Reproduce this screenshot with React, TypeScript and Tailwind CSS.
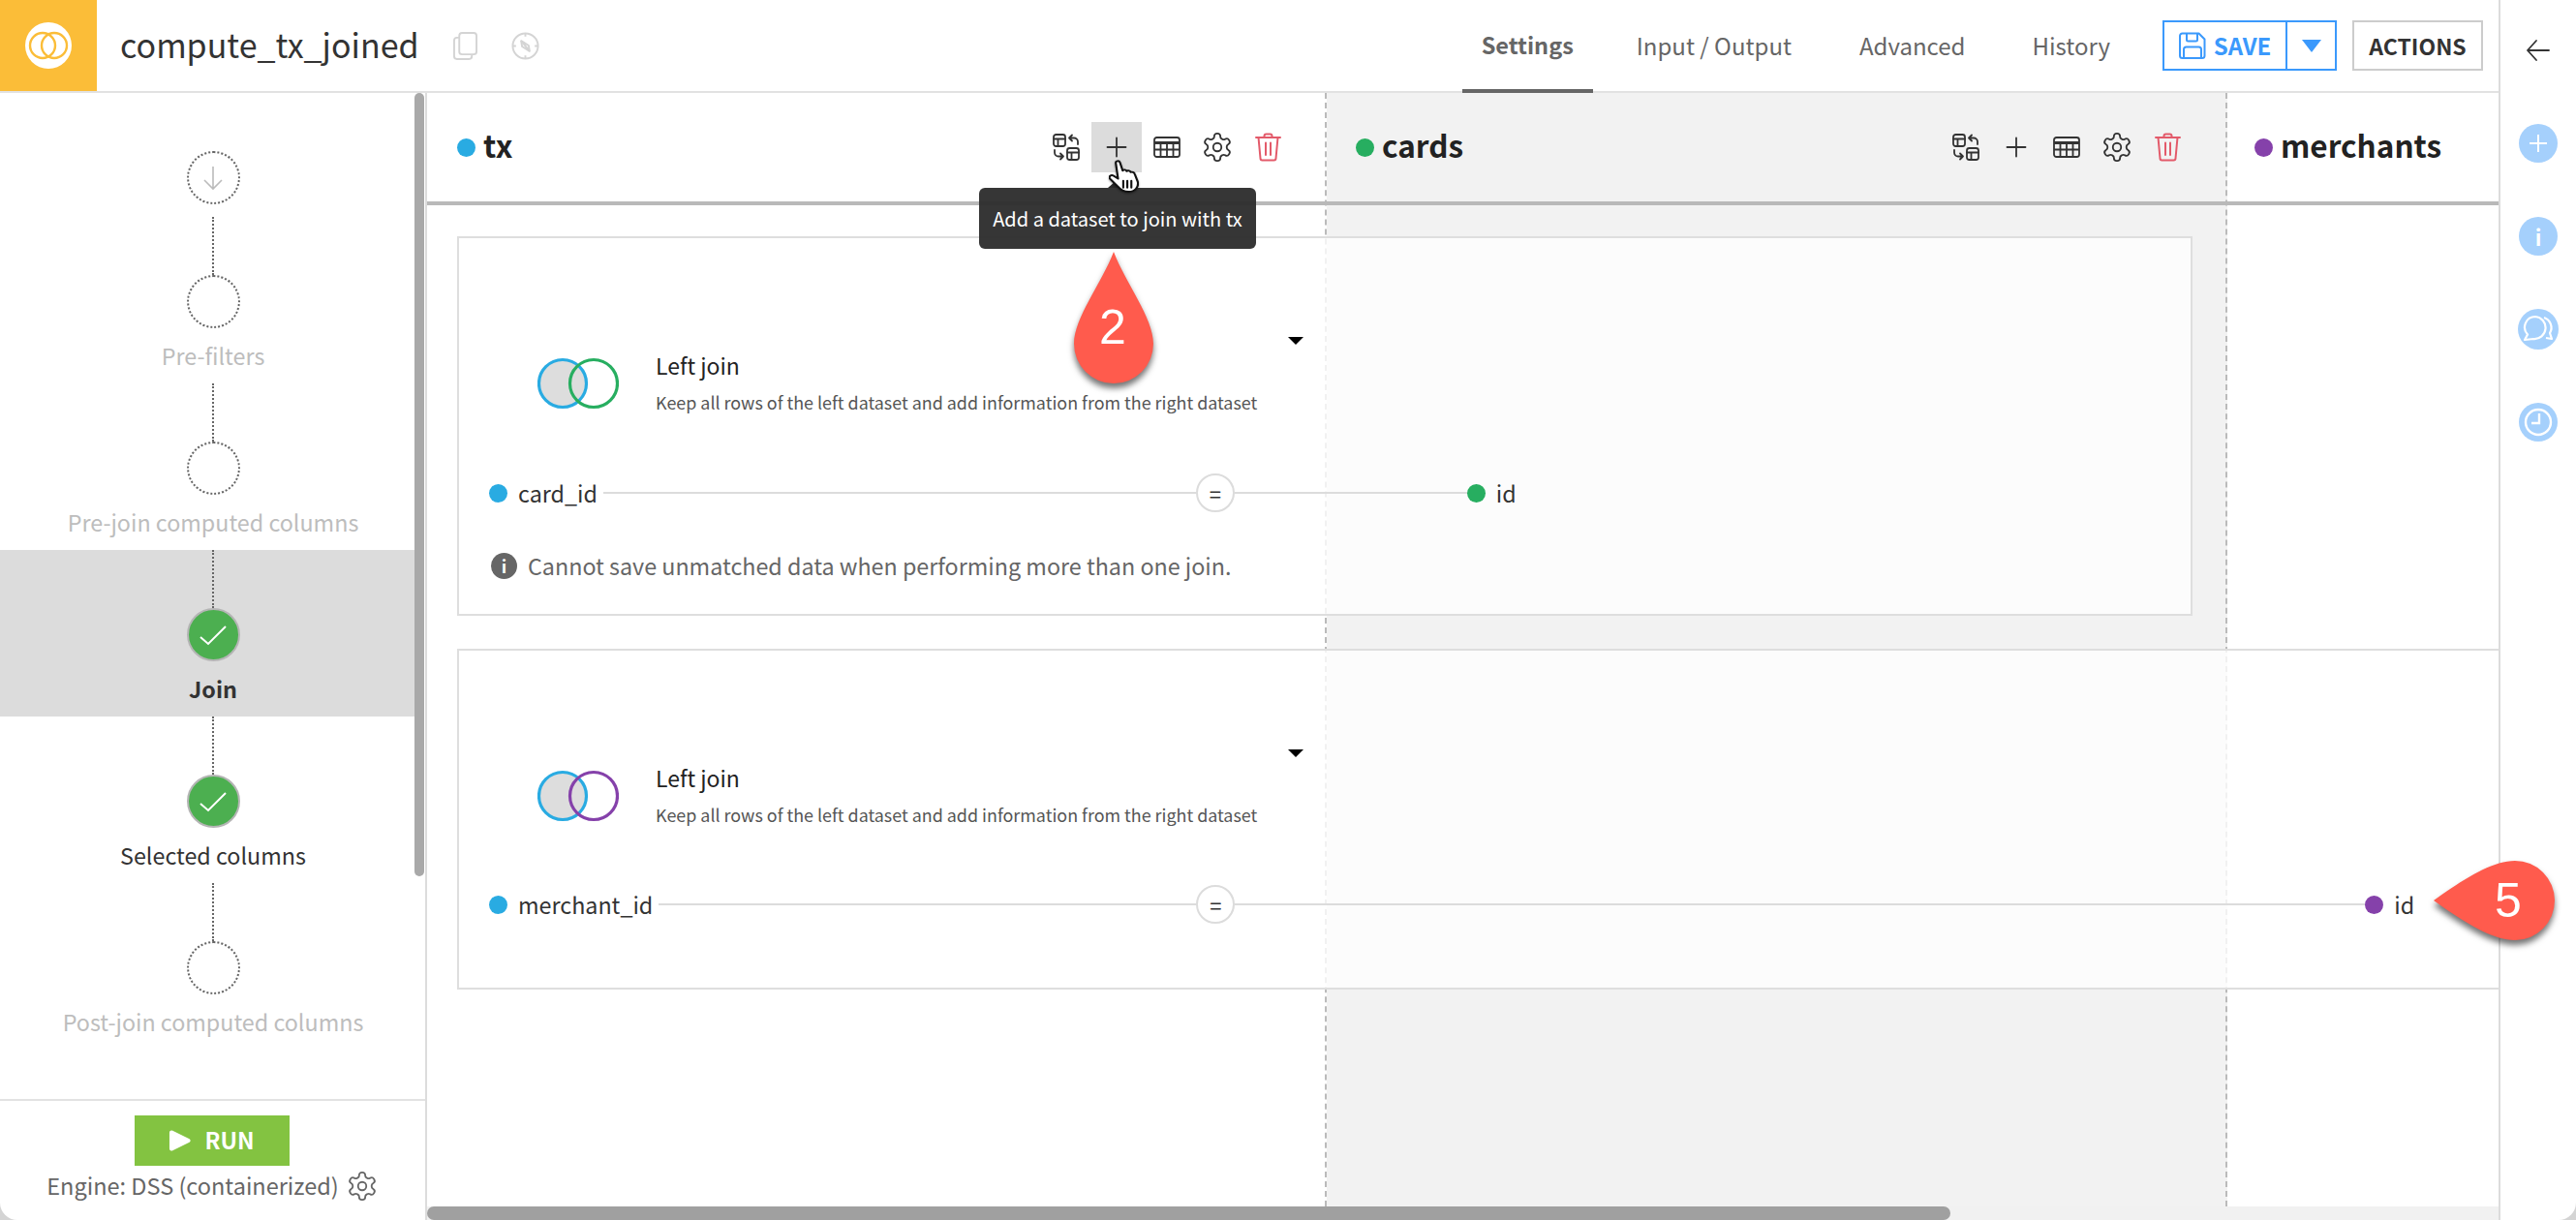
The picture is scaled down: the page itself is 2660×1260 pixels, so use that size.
import React from "react";

const BLUE = "#29abe2";
const GREEN = "#27ae60";
const PURPLE = "#8541aa";

function Swap() {
  return (
    <svg width="28" height="28" viewBox="0 0 28 28" fill="none" stroke="currentColor" strokeWidth="1.800" strokeLinecap="round" strokeLinejoin="round" className="shrink-0">
      <rect x="1" y="1" width="12" height="12" rx="2.500" />
      <path d="M1 5.500h12M5.500 5.500V13" />
      <rect x="15" y="15" width="12" height="12" rx="2.500" />
      <path d="M15 19.500h12M19.500 19.500V27" />
      <path d="M20 1.500l-3 3 3 3M17 4.500h5a4 4 0 0 1 4 4V11" />
      <path d="M8 26.500l3-3-3-3M11 23.500H6a4 4 0 0 1-4-4V17" />
    </svg>
  );
}
function Plus() {
  return (
    <svg width="22" height="22" viewBox="0 0 22 22" stroke="currentColor" strokeWidth="1.800" strokeLinecap="round">
      <path d="M11 1.500v19M1.500 11h19" />
    </svg>
  );
}
function TableIcon() {
  return (
    <svg width="28" height="22" viewBox="0 0 28 22" fill="none" stroke="currentColor" strokeWidth="1.800" className="shrink-0">
      <rect x="1" y="1" width="26" height="20" rx="2.500" />
      <path d="M1 6.500h26" strokeWidth="3" />
      <path d="M1 13.500h26M7.500 7v14M14 7v14M20.500 7v14" />
    </svg>
  );
}
function Gear({ size = 34 }: { size?: number }) {
  return (
    <svg width={size} height={size} viewBox="0 0 24 24" fill="none" stroke="currentColor" strokeWidth="1.300" strokeLinecap="round" strokeLinejoin="round" className="shrink-0">
      <path d="M12.220 2h-.44a2 2 0 0 0-2 2v.18a2 2 0 0 1-1 1.730l-.43.25a2 2 0 0 1-2 0l-.15-.08a2 2 0 0 0-2.730.73l-.22.38a2 2 0 0 0 .73 2.730l.15.1a2 2 0 0 1 1 1.720v.51a2 2 0 0 1-1 1.740l-.15.09a2 2 0 0 0-.73 2.730l.22.38a2 2 0 0 0 2.730.73l.15-.08a2 2 0 0 1 2 0l.43.25a2 2 0 0 1 1 1.730V20a2 2 0 0 0 2 2h.44a2 2 0 0 0 2-2v-.18a2 2 0 0 1 1-1.730l.43-.25a2 2 0 0 1 2 0l.15.08a2 2 0 0 0 2.730-.73l.22-.39a2 2 0 0 0-.73-2.730l-.15-.08a2 2 0 0 1-1-1.740v-.5a2 2 0 0 1 1-1.740l.15-.09a2 2 0 0 0 .73-2.730l-.22-.38a2 2 0 0 0-2.730-.73l-.15.08a2 2 0 0 1-2 0l-.43-.25a2 2 0 0 1-1-1.730V4a2 2 0 0 0-2-2z" />
      <circle cx="12" cy="12" r="3" />
    </svg>
  );
}
function Trash() {
  return (
    <svg width="27" height="30" viewBox="0 0 27 30" fill="none" stroke="#e35a6a" strokeWidth="2" strokeLinecap="round" strokeLinejoin="round" className="shrink-0">
      <path d="M1 5h25M9.500 5V3.500a2 2 0 0 1 2-2h4a2 2 0 0 1 2 2V5" />
      <path d="M3.500 5l2 21.500a2 2 0 0 0 2 2h12a2 2 0 0 0 2-2l2-21.500" />
      <path d="M11 10.500v12.500M16 10.500v12.500" />
    </svg>
  );
}

function Tools({ hover }: { hover?: boolean }) {
  return (
    <div className="flex items-center text-[#333]">
      <div className="w-[28px] flex justify-center"><Swap /></div>
      <div className={"ml-[12px] w-[52px] h-[52px] flex items-center justify-center " + (hover ? "bg-[#dcdcdc]" : "")}><Plus /></div>
      <div className="ml-[12px] w-[28px] flex justify-center"><TableIcon /></div>
      <div className="ml-[24px] w-[28px] flex justify-center"><Gear /></div>
      <div className="ml-[25px] w-[27px] flex justify-center"><Trash /></div>
    </div>
  );
}

function Dot({ color, size = 19 }: { color: string; size?: number }) {
  return <span className="block rounded-full shrink-0" style={{ width: size, height: size, background: color }} />;
}

function Venn({ color }: { color: string }) {
  return (
    <svg width="84" height="54" viewBox="0 0 84 54" fill="none" strokeWidth="3.200" className="shrink-0">
      <circle cx="26" cy="27" r="24.500" fill="#dddddd" stroke={BLUE} />
      <circle cx="58" cy="27" r="24.500" stroke={color} />
    </svg>
  );
}

function Step({ label, state, bold }: { label: string; state: "off" | "done"; bold?: boolean }) {
  return (
    <div className={"flex flex-col items-center h-[172px] pl-[12px] " + (bold ? "bg-[#dcdcdc]" : "")}>
      <div className="w-0 h-[60px] border-l-2 border-dotted border-[#666]" />
      {state === "off" ? (
        <div className="w-[55px] h-[55px] rounded-full border-2 border-dotted border-[#666] shrink-0" />
      ) : (
        <div className="w-[55px] h-[55px] rounded-full bg-[#4caf50] border-2 border-[#b5b5b5] flex items-center justify-center shrink-0">
          <svg width="30" height="24" viewBox="0 0 30 24" fill="none" stroke="white" strokeWidth="2">
            <path d="M2 14l8 7L28 3" />
          </svg>
        </div>
      )}
      <div className={"mt-[13px] text-[23.300px] leading-[30px] whitespace-nowrap " + (state === "off" ? "text-[#bdbdbd]" : "text-[#333]") + (bold ? " font-bold" : "")}>{label}</div>
    </div>
  );
}

function JoinHead({ color }: { color: string }) {
  return (
    <div className="relative flex items-center pl-[81px]">
      <Venn color={color} />
      <div className="ml-[38px]">
        <div className="text-[23px] leading-[30px] text-[#222]">Left join</div>
        <div className="mt-[9px] text-[17.900px] leading-[28px] text-[#555] whitespace-nowrap">Keep all rows of the left dataset and add information from the right dataset</div>
      </div>
      <div className="absolute left-[856px] -top-[14px] w-0 h-0 border-l-[8px] border-r-[8px] border-t-[8px] border-l-transparent border-r-transparent border-t-black" />
    </div>
  );
}

function Cond({ left, leftWidth, color, right, rightWidth }: { left: string; leftWidth: number; color: string; right: string; rightWidth: number }) {
  return (
    <div className="flex items-center pl-[31px] h-[40px]">
      <Dot color={BLUE} />
      <span className="ml-[11px] text-[23.300px] text-[#333] whitespace-nowrap">{left}</span>
      <div className="ml-[6px] h-[2px] bg-[#dcdcdc]" style={{ width: leftWidth }} />
      <div className="w-[40px] h-[40px] rounded-full border-2 border-[#dcdcdc] bg-white flex items-center justify-center text-[22px] text-[#333] shrink-0">=</div>
      <div className="h-[2px] bg-[#dcdcdc]" style={{ width: rightWidth }} />
      <Dot color={color} />
      <span className="ml-[11px] text-[23.300px] text-[#333]">{right}</span>
    </div>
  );
}

function Drop({ className, rotate, path }: { className: string; rotate: number; path: string }) {
  return (
    <div className={"absolute w-[100px] h-[140px] drop-shadow-[0_5px_3px_rgba(0,0,0,0.55)] " + className}>
      <svg width="100" height="140" viewBox="0 0 100 140" className="block overflow-visible" style={{ transform: `rotate(${rotate}deg)` }}>
        <path d={path} fill="#ff5b4d" />
      </svg>
    </div>
  );
}

function Hand() {
  return (
    <svg width="31" height="34" viewBox="1 0 26 33" preserveAspectRatio="none" fill="white" stroke="#111" strokeWidth="1.800" strokeLinejoin="round" strokeLinecap="round" className="block drop-shadow-[0_1px_1px_rgba(0,0,0,0.4)]">
      <path d="M7 3C7 .9 10 .6 10.600 2.600L13 11c1-1.500 3-1 3.500.5 1-1 3-.5 3.500 1 1-.5 3 0 3.500 2l2.500 7.500c1 5-2 10-8 10-5 0-7-2-9-5L2 19c-1.500-2 1-4.500 3-3l4 3z" />
      <path d="M13.500 21v7M17 21v7M20.500 21v7" fill="none" />
    </svg>
  );
}

export default function App() {
  const font = { fontFamily: '"Noto Sans CJK SC", "Noto Sans", sans-serif' };
  const digit = { fontFamily: '"Liberation Sans", sans-serif' };
  return (
    <div className="w-[2660px] h-[1260px] bg-[#d4d4d4]">
      <div className="relative w-[2660px] h-[1260px] flex overflow-hidden bg-white text-[#333] rounded-b-[18px]" style={font}>
        <div className="w-[2580px] flex flex-col shrink-0">
          <header className="h-[96px] shrink-0 border-b-2 border-[#e2e2e2] flex items-center">
            <div className="w-[100px] h-[94px] bg-[#fbbd38] flex items-center justify-center shrink-0">
              <svg width="48" height="48" viewBox="0 0 48 48" fill="none" stroke="#fbbd38" strokeWidth="2.400">
                <circle cx="24" cy="24" r="24" fill="white" stroke="none" />
                <circle cx="18" cy="24" r="13" />
                <circle cx="30" cy="24" r="13" />
              </svg>
            </div>
            <div className="ml-[24px] text-[34px] leading-none text-[#333] pb-[2px] whitespace-nowrap">compute_tx_joined</div>
            <svg className="ml-[35px] shrink-0" width="25" height="29" viewBox="0 0 26 30" fill="none" stroke="#d4d4d4" strokeWidth="2" strokeLinejoin="round">
              <rect x="6.500" y="1" width="18.500" height="23" rx="3" />
              <path d="M6.500 6H4a3 3 0 0 0-3 3v17a3 3 0 0 0 3 3h13a3 3 0 0 0 3-3v-2" />
            </svg>
            <svg className="ml-[35px] shrink-0" width="29" height="29" viewBox="0 0 30 30" fill="none" stroke="#d4d4d4" strokeWidth="2">
              <circle cx="15" cy="15" r="13.500" />
              <path d="M15 1v4M15 25v4M1 15h4M25 15h4" />
              <path d="M10.500 9.500l9 11-1-6z" strokeLinejoin="round" />
              <path d="M10.500 9.500l1 6 8 5" strokeLinejoin="round" />
            </svg>
            <nav className="ml-auto flex h-full items-stretch text-[24px] text-[#666] pr-[16px]">
              <div className="w-[135px] border-b-4 border-[#666] -mb-[2px] flex items-center justify-center font-semibold text-[23.500px] pt-[2px]">Settings</div>
              <div className="ml-[45px] flex items-center">Input / Output</div>
              <div className="ml-[70px] flex items-center">Advanced</div>
              <div className="ml-[69px] flex items-center">History</div>
              <div className="ml-[54px] self-center flex h-[52px] border-2 border-[#3b99fc] text-[#3b99fc]">
                <div className="w-[127px] flex items-center justify-center gap-[8px] border-r-2 border-[#3b99fc] font-semibold text-[24px]">
                  <svg width="28" height="28" viewBox="0 0 28 28" fill="none" stroke="#3b99fc" strokeWidth="2" strokeLinejoin="round">
                    <path d="M3.500 1.500h17l6 6v17a2.500 2.500 0 0 1-2.500 2.500H3.500A2.500 2.500 0 0 1 1 24.500V4a2.500 2.500 0 0 1 2.500-2.500z" />
                    <path d="M8 1.500V8a1.500 1.500 0 0 0 1.500 1.500h8A1.500 1.500 0 0 0 19 8V1.500" />
                    <path d="M5 27v-9a2.500 2.500 0 0 1 2.500-2.500h13A2.500 2.500 0 0 1 23 18v9" />
                  </svg>
                  SAVE
                </div>
                <div className="flex-1 w-[49px] flex items-center justify-center">
                  <div className="w-0 h-0 border-l-[10px] border-r-[10px] border-t-[13px] border-l-transparent border-r-transparent border-t-[#3b99fc]" />
                </div>
              </div>
              <div className="ml-[16px] self-center h-[52px] w-[135px] border-2 border-[#cccccc] flex items-center justify-center text-[23px] font-semibold text-[#333]">ACTIONS</div>
            </nav>
          </header>
          <div className="flex-1 flex min-h-0">
            <aside className="w-[441px] shrink-0 border-r-2 border-[#dcdcdc] flex flex-col">
              <div className="flex-1 min-h-0 overflow-hidden relative">
                <div className="w-[428px] pt-[60px]">
                  <div className="flex justify-center h-[55px] pl-[12px] mb-[13px]">
                    <div className="w-[55px] h-[55px] rounded-full border-2 border-dotted border-[#666] flex items-center justify-center">
                      <svg width="20" height="26" viewBox="0 0 20 26" fill="none" stroke="#bbbbbb" strokeWidth="1.600"><path d="M10 1v23M1 15l9 9 9-9" /></svg>
                    </div>
                  </div>
                  <Step label="Pre-filters" state="off" />
                  <Step label="Pre-join computed columns" state="off" />
                  <Step label="Join" state="done" bold />
                  <Step label="Selected columns" state="done" />
                  <Step label="Post-join computed columns" state="off" />
                </div>
                <div className="absolute left-[428px] top-0 w-[10px] h-[809px] rounded-[5px] bg-[#a9a9a9]" />
              </div>
              <div className="h-[125px] shrink-0 border-t-2 border-[#e2e2e2] flex flex-col items-center pt-[15px]">
                <div className="-ml-[2px] w-[160px] h-[52px] bg-[#83c341] flex items-center justify-center gap-[14px] text-white text-[23.500px] font-semibold">
                  <svg width="23" height="24" viewBox="0 0 24 24" fill="white"><path d="M1 3.500a2.500 2.500 0 0 1 3.500-2.300l18 9a2 2 0 0 1 0 3.600l-18 9a2.500 2.500 0 0 1-3.500-2.300z" /></svg>
                  RUN
                </div>
                <div className="mt-[3px] flex items-center gap-[7px] text-[23.500px] text-[#666] whitespace-nowrap">
                  Engine: DSS (containerized)
                  <Gear size={34} />
                </div>
              </div>
            </aside>
            <main className="relative flex-1 min-w-0 overflow-hidden">
              <div className="absolute inset-x-0 top-0 bottom-[14px] flex">
                <div className="w-[929px] border-r-2 border-dashed border-[#bbbbbb]" />
                <div className="w-[930px] bg-[#f2f2f2] border-r-2 border-dashed border-[#bbbbbb]" />
                <div className="flex-1" />
              </div>
              <div className="absolute inset-x-0 bottom-0 h-[14px] bg-[#f1f1f1]">
                <div className="w-[1573px] h-[14px] rounded-[7px] bg-[#a0a0a0]" />
              </div>
              <div className="relative flex h-[116px] border-b-4 border-[#b9b9b9]">
                <div className="w-[929px] flex items-center pl-[31px] pr-[47px]">
                  <Dot color={BLUE} />
                  <div className="ml-[8px] text-[31.500px] font-semibold text-[#222] -mt-[5px]">tx</div>
                  <div className="ml-auto"><Tools hover /></div>
                </div>
                <div className="w-[930px] flex items-center pl-[30px] pr-[48px]">
                  <Dot color={GREEN} />
                  <div className="ml-[8px] text-[31.500px] font-semibold text-[#222] -mt-[5px]">cards</div>
                  <div className="ml-auto"><Tools /></div>
                </div>
                <div className="flex-1 flex items-center pl-[28px]">
                  <Dot color={PURPLE} />
                  <div className="ml-[8px] text-[31.500px] font-semibold text-[#222] -mt-[5px]">merchants</div>
                </div>
              </div>
              <div className="relative pl-[31px] pt-[32px]">
                <div className="w-[1792px] h-[392px] border-2 border-[#dedede] bg-white/80 pt-[116px]">
                  <JoinHead color={GREEN} />
                  <div className="mt-[60px]"><Cond left="card_id" leftWidth={612} color={GREEN} right="id" rightWidth={240} /></div>
                  <div className="mt-[38px] flex items-center pl-[33px] text-[23.300px] text-[#666]">
                    <span className="w-[27px] h-[27px] rounded-full bg-[#666] flex items-center justify-center text-white text-[18px] font-bold shrink-0">i</span>
                    <span className="ml-[11px]">Cannot save unmatched data when performing more than one join.</span>
                  </div>
                </div>
                <div className="mt-[34px] w-[2200px] h-[352px] border-2 border-[#dedede] bg-white/80 pt-[116px]">
                  <JoinHead color={PURPLE} />
                  <div className="mt-[59px]"><Cond left="merchant_id" leftWidth={555} color={PURPLE} right="id" rightWidth={1167} /></div>
                </div>
              </div>
            </main>
          </div>
        </div>
        <aside className="w-[80px] shrink-0 border-l-2 border-[#dcdcdc] flex flex-col items-center text-white">
          <svg className="mt-[39px]" width="26" height="26" viewBox="0 0 26 26" fill="none" stroke="#333" strokeWidth="1.800" strokeLinecap="round" strokeLinejoin="round"><path d="M2 13h22M11 3L2 13l9 10" /></svg>
          <div className="mt-[63px] w-[40px] h-[40px] rounded-full bg-[#a5d0fc] flex items-center justify-center"><svg width="22" height="22" viewBox="0 0 22 22" stroke="white" strokeWidth="2"><path d="M11 2v18M2 11h18" /></svg></div>
          <div className="mt-[56px] w-[40px] h-[40px] rounded-full bg-[#a5d0fc] flex items-center justify-center text-[22px] font-semibold">i</div>
          <div className="mt-[55px] w-[42px] h-[42px] rounded-full bg-[#a5d0fc] flex items-center justify-center">
            <svg width="34" height="32" viewBox="0 0 34 32" fill="none" stroke="white" strokeWidth="2.200" strokeLinejoin="round"><path d="M14 3a11 11 0 0 0-8 18.500L3 27l9-1A11 11 0 1 0 14 3z" /><path d="M23 4a11 11 0 0 1 6 16l2 6-6-1" /></svg>
          </div>
          <div className="mt-[55px] w-[40px] h-[40px] rounded-full bg-[#a5d0fc] flex items-center justify-center">
            <svg width="30" height="30" viewBox="0 0 30 30" fill="none" stroke="white" strokeWidth="2.400"><circle cx="15" cy="15" r="13" /><path d="M16 6v10H8" /></svg>
          </div>
        </aside>

        <div className="absolute left-[1011px] top-[194px] w-[286px] h-[63px] rounded-[6px] bg-[#2b2b2b]/95 text-white text-[20px] flex items-center justify-center whitespace-nowrap">
          <div className="absolute left-[133px] -top-[7px] w-0 h-0 border-l-[8px] border-r-[8px] border-b-[7px] border-l-transparent border-r-transparent border-b-[#2b2b2b]" />
          Add a dataset to join with tx
        </div>
        <div className="absolute left-[1145px] top-[165px]"><Hand /></div>
        <Drop className="left-[1100px] top-[256px]" rotate={0} path="M50 4 C62 36 91 72 91 99 A41 41 0 0 1 9 99 C9 72 38 36 50 4 Z" />
        <div className="absolute left-[1124px] top-[310px] w-[50px] text-center text-white text-[50px] leading-[56px]" style={digit}>2</div>
        <Drop className="left-[2518px] top-[860px]" rotate={-90} path="M50 15 C66 38 91 72 91 99 A41 41 0 0 1 9 99 C9 72 34 38 50 15 Z" />
        <div className="absolute left-[2565px] top-[902px] w-[50px] text-center text-white text-[50px] leading-[56px]" style={digit}>5</div>
      </div>
    </div>
  );
}
